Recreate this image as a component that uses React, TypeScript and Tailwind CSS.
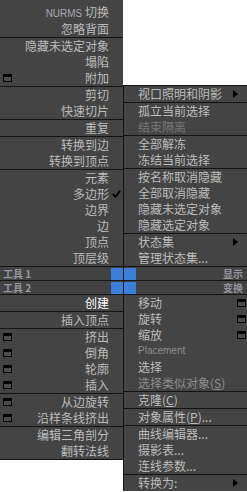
import type { ReactNode } from "react";

type Item = {
  label: ReactNode;
  tone?: "dim" | "white" | "muted";
  icon?: boolean;
  check?: boolean;
  arrow?: boolean;
  latin?: boolean;
};

const CJK = "font-['Noto_Sans_CJK_SC','Noto_Sans',sans-serif]";
const LATIN = "font-['Liberation_Sans','Noto_Sans_CJK_SC',sans-serif]";

const key = (c: string) => <span className="underline">{c}</span>;

const leftTop: Item[][] = [
  [
    { label: <><span className={`${LATIN} text-[10px] text-[#a8a8b4]`}>NURMS</span> 切换</> },
    { label: "忽略背面" },
  ],
  [{ label: "隐藏未选定对象" }, { label: "塌陷" }, { label: "附加", icon: true }],
  [{ label: "剪切" }, { label: "快速切片" }],
  [{ label: "重复" }],
  [{ label: "转换到边" }, { label: "转换到顶点" }],
  [
    { label: "元素" },
    { label: "多边形", check: true },
    { label: "边界" },
    { label: "边" },
    { label: "顶点" },
    { label: "顶层级" },
  ],
];

const rightTop: Item[][] = [
  [{ label: "视口照明和阴影", arrow: true }],
  [{ label: "孤立当前选择" }, { label: "结束隔离", tone: "dim" }],
  [{ label: "全部解冻" }, { label: "冻结当前选择" }],
  [
    { label: "按名称取消隐藏" },
    { label: "全部取消隐藏" },
    { label: "隐藏未选定对象" },
    { label: "隐藏选定对象" },
  ],
  [{ label: "状态集", arrow: true }, { label: "管理状态集..." }],
];

const leftBottom: Item[][] = [
  [{ label: "创建", tone: "white" }],
  [{ label: "插入顶点" }],
  [
    { label: "挤出", icon: true },
    { label: "倒角", icon: true },
    { label: "轮廓", icon: true },
    { label: "插入", icon: true },
  ],
  [{ label: "从边旋转", icon: true }, { label: "沿样条线挤出", icon: true }],
  [{ label: "编辑三角剖分" }, { label: "翻转法线" }],
];

const rightBottom: Item[][] = [
  [
    { label: "移动", icon: true },
    { label: "旋转", icon: true },
    { label: "缩放", icon: true },
    { label: "Placement", latin: true, tone: "muted" },
    { label: "选择" },
    { label: <>选择类似对象({key("S")})</>, tone: "muted" },
  ],
  [{ label: <>克隆({key("C")})</> }],
  [{ label: <>对象属性({key("P")})...</> }],
  [{ label: "曲线编辑器..." }, { label: "摄影表..." }, { label: "连线参数..." }],
  [{ label: "转换为:", arrow: true }],
];

function toneClass(tone?: Item["tone"]) {
  if (tone === "dim") return "text-[#767676]";
  if (tone === "white") return "text-white";
  if (tone === "muted") return "text-[#8e8e8e]";
  return "text-[#bcbcbc]";
}

function WinIcon() {
  return <div className="w-[9px] h-[8px] border border-black border-t-[3px] bg-[#4c4c4c]" />;
}

function Check() {
  return (
    <svg width="9" height="8" viewBox="0 0 9 8">
      <path d="M1 4 L3.5 7 L8 0.8" fill="none" stroke="#000" strokeWidth="2" />
    </svg>
  );
}

function Arrow() {
  return (
    <svg width="5" height="8" viewBox="0 0 5 8">
      <polygon points="0,0 5,4 0,8" fill="#000" />
    </svg>
  );
}

function LeftRow({ item }: { item: Item }) {
  return (
    <div className="flex h-4 items-center">
      <div className="flex w-[13px] shrink-0 pl-[3px]">{item.icon && <WinIcon />}</div>
      <div className={`flex-1 text-right text-[12px] leading-4 whitespace-nowrap ${CJK} ${toneClass(item.tone)}`}>
        {item.label}
      </div>
      <div className="flex w-[14px] shrink-0 justify-center pl-[1px]">{item.check && <Check />}</div>
    </div>
  );
}

function RightRow({ item }: { item: Item }) {
  return (
    <div className="flex h-4 items-center">
      <div className="w-[14px] shrink-0" />
      <div
        className={`flex-1 whitespace-nowrap leading-4 ${
          item.latin ? `${LATIN} text-[10px]` : `${CJK} text-[12px]`
        } ${toneClass(item.tone)}`}
      >
        {item.label}
      </div>
      <div className="flex w-[14px] shrink-0 justify-end pr-[1px]">
        {item.icon && <WinIcon />}
        {item.arrow && (
          <div className="pr-[8px]">
            <Arrow />
          </div>
        )}
      </div>
    </div>
  );
}

function Section({ items, side, first, top }: { items: Item[]; side: "l" | "r"; first?: boolean; top?: boolean }) {
  return (
    <div className={top ? "pt-[5px]" : first ? "" : "border-t border-[#141414]"}>
      {items.map((it, i) =>
        side === "l" ? <LeftRow key={i} item={it} /> : <RightRow key={i} item={it} />
      )}
    </div>
  );
}

function HeaderRow({ left, right }: { left: string; right: string }) {
  return (
    <div className="flex h-[14px] border-t border-[#141414] bg-[#424242] text-[10px] font-bold text-[#9595a0]">
      <div className="flex w-[123px] items-center justify-between pl-[3px]">
        <span className={`${CJK} leading-none`}>{left}</span>
        <div className="h-[12px] w-[12px] bg-[#3a7fd8]" />
      </div>
      <div className="flex flex-1 items-center justify-between border-l border-[#141414] pr-[4px]">
        <div className="h-[12px] w-[12px] bg-[#3a7fd8]" />
        <span className={`${CJK} leading-none`}>{right}</span>
      </div>
    </div>
  );
}

export default function App() {
  return (
    <div className="w-[247px] h-[492px] overflow-hidden bg-white">
      <div className="flex items-end">
        <div className="w-[123px] bg-[#444444]">
          {leftTop.map((s, i) => (
            <Section key={i} items={s} side="l" top={i === 0} />
          ))}
        </div>
        <div className="flex-1 border-l border-t border-[#141414] bg-[#444444]">
          {rightTop.map((s, i) => (
            <Section key={i} items={s} side="r" first={i === 0} />
          ))}
        </div>
      </div>

      <HeaderRow left="工具 1" right="显示" />
      <HeaderRow left="工具 2" right="变换" />

      <div className="flex items-start">
        <div className="w-[123px] border-b border-[#141414] bg-[#444444]">
          {leftBottom.map((s, i) => (
            <Section key={i} items={s} side="l" />
          ))}
        </div>
        <div className="flex-1 border-l border-[#141414] bg-[#444444]">
          {rightBottom.map((s, i) => (
            <Section key={i} items={s} side="r" />
          ))}
        </div>
      </div>
    </div>
  );
}
